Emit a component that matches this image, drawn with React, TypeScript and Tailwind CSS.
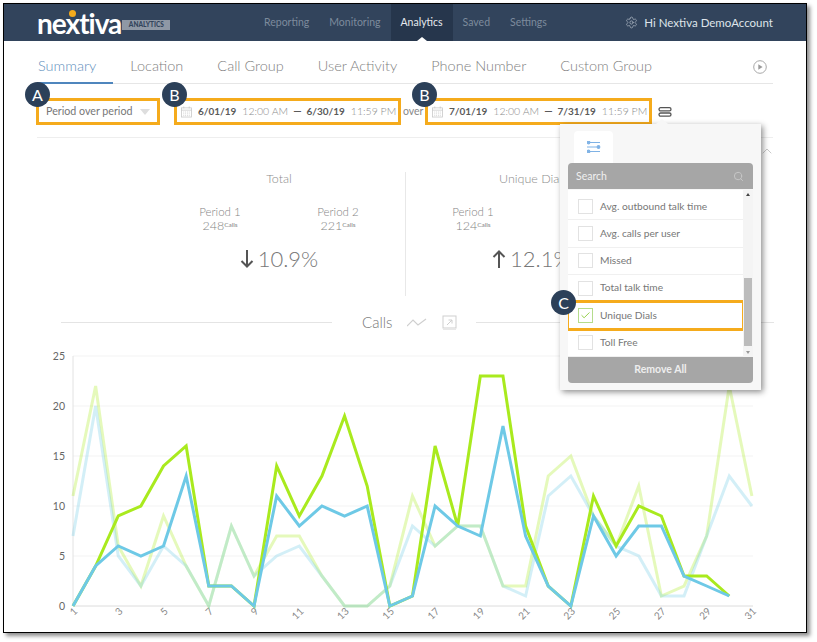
import { Check, ChevronUp, Search, Settings } from 'lucide-react';

const tabs = ['Summary', 'Location', 'Call Group', 'User Activity', 'Phone Number', 'Custom Group'];
const navItems = ['Reporting', 'Monitoring', 'Analytics', 'Saved', 'Settings'];
const metrics = ['Avg. outbound talk time', 'Avg. calls per user', 'Missed', 'Total talk time', 'Unique Dials', 'Toll Free'];

const series = [
  { color: '#a9ea1e', opacity: 0.3, data: [11, 22, 6, 2, 9, 4, 0, 8, 3, 7, 7, 3, 0, 0, 2, 11, 6, 8, 8, 2, 2, 13, 15, 9, 6, 12, 1, 2, 7, 22, 11] },
  { color: '#6ec9e6', opacity: 0.3, data: [7, 20, 5, 2, 6, 4, 0, 8, 3, 5, 6, 3, 0, 0, 2, 8, 6, 8, 8, 2, 1, 11, 13, 9, 6, 5, 1, 1, 7, 13, 10] },
  { color: '#a9ea1e', opacity: 1, data: [0, 4, 9, 10, 14, 16, 2, 2, 0, 14, 9, 13, 19, 12, 0, 1, 16, 8, 23, 23, 8, 2, 0, 11, 6, 10, 9, 3, 3, 1] },
  { color: '#6ec9e6', opacity: 1, data: [0, 4, 6, 5, 6, 13, 2, 2, 0, 11, 8, 10, 9, 10, 0, 1, 10, 8, 7, 18, 7, 2, 0, 9, 5, 8, 8, 3, 2, 1] },
];

const xAt = (day: number) => 73 + (day - 1) * 22.63;
const yAt = (v: number) => 606 - v * 10;

function Badge({ letter, className }: { letter: string; className: string }) {
  return (
    <div className={`absolute z-30 flex h-[25px] w-[25px] items-center justify-center rounded-full bg-[#2c4059] text-[16px] text-white ${className}`}>
      {letter}
    </div>
  );
}

function CalendarIcon() {
  return (
    <svg width="11" height="12" viewBox="0 0 12 12" fill="none" stroke="#c4c4c4" strokeWidth="0.8" className="shrink-0">
      <rect x="0.5" y="1.5" width="11" height="10" />
      <path d="M3 0v2M9 0v2M0.5 4h11" />
      <path d="M2.5 6h7M2.5 8h7M2.5 10h7" strokeDasharray="1 1" />
    </svg>
  );
}

function DateRange({ from, to, className }: { from: string; to: string; className: string }) {
  return (
    <div className={`flex h-[27px] shrink-0 items-center whitespace-nowrap border-[3px] border-[#f5ab1c] pl-[4px] text-[10.5px] font-light text-[#8a8a8a] ${className}`}>
      <CalendarIcon />
      <b className="ml-[6px] text-[10px] font-bold text-[#5a5a5a]">{from}</b>
      <span className="ml-[6px]">12:00 AM</span>
      <span className="mx-[5px] font-bold text-[#5a5a5a]">—</span>
      <b className="text-[10px] font-bold text-[#5a5a5a]">{to}</b>
      <span className="ml-[6px]">11:59 PM</span>
    </div>
  );
}

function Count({ label, value }: { label: string; value: number }) {
  return (
    <div className="w-[60px] text-center font-light leading-[14px] text-[#858585]">
      <div className="text-[11.5px]">{label}</div>
      <div className="text-[12.5px]">
        {value}
        <sup className="text-[6.5px] font-normal">Calls</sup>
      </div>
    </div>
  );
}

function Delta({ up, value }: { up?: boolean; value: string }) {
  return (
    <div className="flex items-center justify-center text-[22px] font-light leading-[30px] text-[#777]">
      <svg width="14" height="18" viewBox="0 0 14 18" fill="none" stroke="#555" strokeWidth="2" className={up ? 'mr-[4px] rotate-180' : 'mr-[4px]'}>
        <path d="M7 0v16M1.5 11 7 16.5 12.5 11" />
      </svg>
      {value}
    </div>
  );
}

function Chart() {
  return (
    <svg width="802" height="292" viewBox="4 340 802 292" className="block">
      {[5, 10, 15, 20, 25].map((v) => (
        <line key={v} x1="73" x2="753" y1={yAt(v)} y2={yAt(v)} stroke="#f3f3f3" strokeWidth="1" />
      ))}
      <line x1="73" x2="73" y1="356" y2="606" stroke="#e2e2e2" />
      <line x1="73" x2="753" y1="606" y2="606" stroke="#dcdcdc" />
      {[0, 5, 10, 15, 20, 25].map((v) => (
        <text key={v} x="65" y={yAt(v) + 4} textAnchor="end" fontSize="10.5" fill="#666">{v}</text>
      ))}
      {Array.from({ length: 16 }, (_, i) => i * 2 + 1).map((day) => (
        <text
          key={day}
          x={xAt(day) + 5}
          y="612"
          textAnchor="end"
          fontSize="10"
          fill="#888"
          transform={`rotate(-45 ${xAt(day) + 5} 612)`}
        >
          {day}
        </text>
      ))}
      {series.map((s, i) => (
        <polyline
          key={i}
          fill="none"
          stroke={s.color}
          strokeOpacity={s.opacity}
          strokeWidth="3"
          strokeLinejoin="miter"
          points={s.data.map((v, d) => `${xAt(d + 1)},${yAt(v)}`).join(' ')}
        />
      ))}
    </svg>
  );
}

function MetricsPopover() {
  return (
    <div className="absolute left-[556px] top-[120px] z-20 h-[266px] w-[201px] bg-[#f7f7f7] px-2 pt-[7px] shadow-[2px_2px_6px_rgba(0,0,0,0.45)]">
      <div className="absolute -top-[5px] left-[96px] h-0 w-0 border-x-[6px] border-b-[5px] border-x-transparent border-b-[#f7f7f7]" />
      <div className="ml-[6px] flex h-[32px] w-[39px] items-center justify-center rounded-t bg-white">
        <svg width="14" height="12" viewBox="0 0 14 12" stroke="#7fb2e5" strokeWidth="1.2" fill="#7fb2e5">
          <path d="M3 1.5h10M0 6h10M3 10.5h10" />
          <circle cx="1.5" cy="1.5" r="1.3" />
          <circle cx="11.5" cy="6" r="1.3" />
          <circle cx="1.5" cy="10.5" r="1.3" />
        </svg>
      </div>
      <div className="flex h-[26px] items-center justify-between rounded-t bg-[#a6a6a6] pl-2 pr-[9px] text-[10.5px] leading-[27px] text-[#f0f0f0]">
        <span className="mt-px">Search</span>
        <Search size={11} className="text-[#c8c8c8]" />
      </div>
      <div className="mt-px flex h-[167px] bg-white">
        <div className="w-[175px] overflow-hidden pt-[3px]">
          {metrics.map((m) => {
            const on = m === 'Unique Dials';
            return (
              <div
                key={m}
                className={`flex h-[27.3px] items-center pl-[10px] text-[10.2px] text-[#777] ${on ? 'relative outline-[3px] -outline-offset-1 outline-[#f5ab1c]' : 'border-b border-[#f0f0f0]'}`}
              >
                <span className={`flex h-[15px] w-[15px] items-center justify-center border ${on ? 'border-[#b5dc8c]' : 'border-[#e2e2e2]'}`}>
                  {on && <Check size={11} strokeWidth={2} className="text-[#8ccb3c]" />}
                </span>
                <span className="ml-[7px]">{m}</span>
              </div>
            );
          })}
        </div>
        <div className="flex w-[10px] flex-col items-center justify-between bg-[#f4f4f4] text-[#555]">
          <span className="mt-[3px] h-0 w-0 border-x-[2.5px] border-b-[3px] border-x-transparent border-b-[#444]" />
          <span className="mt-[76px] h-[68px] w-[8px] bg-[#bcbcbc]" />
          <span className="mb-[3px] h-0 w-0 border-x-[2.5px] border-t-[3px] border-x-transparent border-t-[#999]" />
        </div>
      </div>
      <div className="flex h-[26px] items-center justify-center rounded-b bg-[#a6a6a6] text-[10.5px] font-bold text-[#eeeeee]">Remove All</div>
    </div>
  );
}

export default function App() {
  return (
    <div className="h-[642px] w-[817px] overflow-hidden bg-white pl-[3px] pt-[3px] font-['Lato',sans-serif]">
      <div className="relative h-[630px] w-[804px] border border-black bg-white shadow-[3px_3px_4px_rgba(0,0,0,0.45)]">
        {/* top bar */}
        <header className="flex h-[37px] items-center whitespace-nowrap bg-[#32445c] pr-[33px]">
          <div className="relative ml-[33px] flex w-[217px] shrink-0 items-center">
            <span className="text-[28px] font-bold leading-none tracking-[-1px] text-white">nextiva</span>
            <span className="absolute left-[32px] top-[1px] h-[7px] w-[7px] rounded-full bg-[#f5ab1c]" />
            <span className="ml-[1px] mt-[4px] flex h-[10px] w-[48px] items-center justify-center bg-[#8f98a5] text-[6.5px] font-black text-[#32445c]">ANALYTICS</span>
          </div>
          <nav className="flex h-full text-[10.5px]">
            {navItems.map((n) => (
              <div
                key={n}
                className={`relative flex h-full items-center px-[10px] ${n === 'Analytics' ? 'bg-[#26364c] text-[#e6eaef]' : 'text-[#7d8b9c]'}`}
              >
                {n}
                {n === 'Analytics' && (
                  <span className="absolute bottom-0 left-[26px] h-0 w-0 border-x-[5px] border-b-[4px] border-x-transparent border-b-white" />
                )}
              </div>
            ))}
          </nav>
          <Settings size={13} strokeWidth={1.2} className="ml-auto text-[#b9c2cd]" />
          <span className="ml-[6px] text-[11.5px] text-[#dfe4ea]">Hi Nextiva DemoAccount</span>
        </header>

        {/* report tabs */}
        <div className="mx-[33px] flex h-[43px] items-stretch justify-between border-b border-[#e6e6e6] pt-[14px]">
          <div className="flex gap-[34px] whitespace-nowrap text-[14.5px] font-light text-[#7f7f7f]">
            {tabs.map((t, i) => (
              <div key={t} className={i === 0 ? '-mb-px -mr-[17px] border-b-2 border-[#4f86bd] pl-px pr-[17px] text-[#5f90bd]' : ''}>
                {t}
              </div>
            ))}
          </div>
          <svg width="14" height="14" viewBox="0 0 14 14" className="mr-[6px] mt-[5px]">
            <circle cx="7" cy="7" r="6.3" fill="none" stroke="#a8a8a8" />
            <path d="M5.3 4.3 9.6 7 5.3 9.7z" fill="#9a9a9a" />
          </svg>
        </div>

        {/* period filters */}
        <div className="mx-[32px] flex items-center whitespace-nowrap pt-[14px]">
          <div className="flex h-[27px] w-[124px] shrink-0 items-center justify-between border-[3px] border-[#f5ab1c] pl-[7px] pr-[7px] text-[10.7px] text-[#777]">
            Period over period
            <span className="h-0 w-0 border-x-[5px] border-t-[6px] border-x-transparent border-t-[#dedede]" />
          </div>
          <DateRange from="6/01/19" to="6/30/19" className="ml-[14px] w-[227px]" />
          <span className="ml-[2px] w-[22px] shrink-0 text-[10.5px] text-[#888]">over</span>
          <DateRange from="7/01/19" to="7/31/19" className="w-[227px]" />
          <svg width="14" height="10" viewBox="0 0 14 10" className="ml-[6px] shrink-0" fill="none" stroke="#555" strokeWidth="1.3">
            <rect x="1" y="0.7" width="12" height="3.2" rx="1.6" />
            <rect x="1" y="6" width="12" height="3.2" rx="1.6" />
          </svg>
        </div>
        <div className="mx-[33px] mt-[12px] border-b border-[#eeeeee]" />

        {/* totals */}
        <div className="mx-[33px] flex h-[176px]">
          <div className="mt-[34px] h-[124px] w-[369px] shrink-0 border-r border-[#e8e8e8] pl-[116px]">
            <div className="-mt-[2px] text-center text-[12.5px] font-light text-[#8c8c8c]">Total</div>
            <div className="mt-[16px] flex justify-center gap-[58px]">
              <Count label="Period 1" value={248} />
              <Count label="Period 2" value={221} />
            </div>
            <div className="mt-[11px]">
              <Delta value="10.9%" />
            </div>
          </div>
          <div className="mt-[34px] w-[353px] shrink-0 pl-[37px]">
            <div className="-mt-[2px] pl-[56px] text-[12.5px] font-light text-[#8c8c8c]">Unique Dials</div>
            <div className="mt-[16px]">
              <Count label="Period 1" value={124} />
            </div>
            <div className="mt-[11px] flex pl-[49px]">
              <Delta up value="12.1%" />
            </div>
          </div>
          <ChevronUp size={16} strokeWidth={1.2} className="mt-[5px] shrink-0 text-[#bbbbbb]" />
        </div>

        {/* chart heading */}
        <div className="ml-[57px] mr-[32px] flex h-[17px] items-center">
          <div className="h-px w-[271px] bg-[#e4e4e4]" />
          <span className="ml-[30px] text-[15px] font-light text-[#777]">Calls</span>
          <svg width="20" height="10" viewBox="0 0 20 10" className="ml-[15px]" fill="none" stroke="#cfcfcf" strokeWidth="1.2">
            <path d="M0 8 6 2l5 5 8-6" />
          </svg>
          <svg width="15" height="15" viewBox="0 0 15 15" className="ml-[15px]" fill="none" stroke="#cfcfcf">
            <rect x="1" y="1" width="13" height="12" />
            <path d="M5 10l5-5M6.5 5H10v3.5" />
            <path d="M1 14.5h13" stroke="#e8e8e8" />
          </svg>
          <div className="ml-[19px] h-px flex-1 bg-[#e4e4e4]" />
        </div>

        <div className="mt-[9px]">
          <Chart />
        </div>

        <MetricsPopover />
        <Badge letter="A" className="left-[21px] top-[78px]" />
        <Badge letter="B" className="left-[158px] top-[78px]" />
        <Badge letter="B" className="left-[408px] top-[78px]" />
        <Badge letter="C" className="left-[547px] top-[286px]" />
      </div>
    </div>
  );
}
